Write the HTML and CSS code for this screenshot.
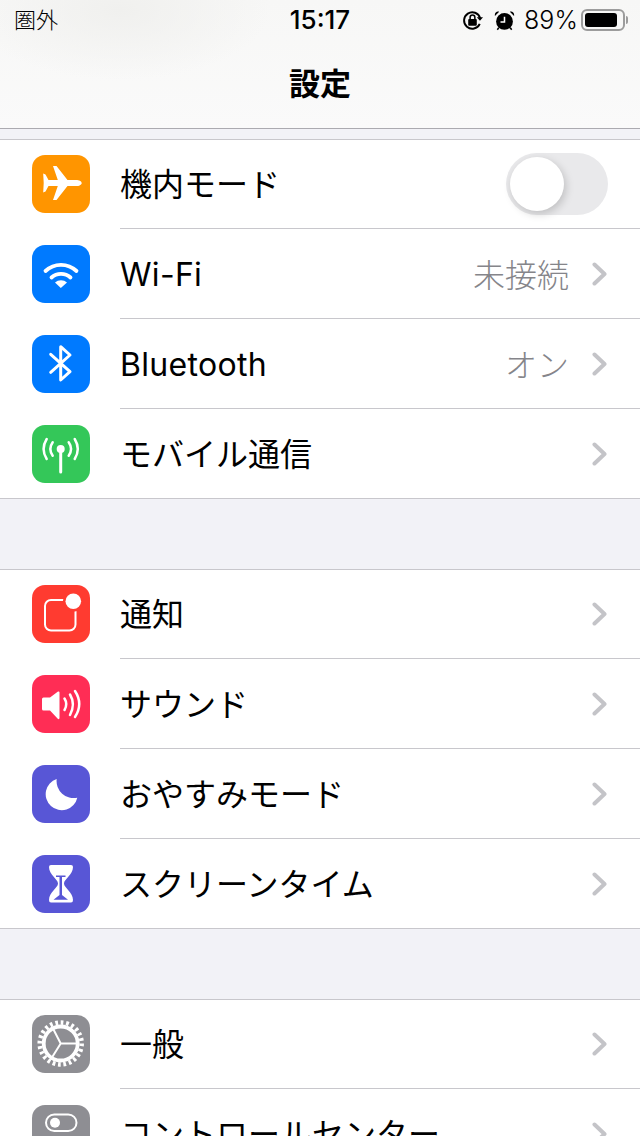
FILE: index.html
```html
<!DOCTYPE html>
<html lang="ja">
<head>
<meta charset="utf-8">
<title>設定</title>
<link rel="stylesheet" href="styles.css">
</head>
<body>
<header class="header">
  <div class="status">
    <span class="carrier">圏外</span>
    <span class="time">15:17</span>
    <div class="status-right">
      <svg class="st-lock" viewBox="0 0 22 22"><path class="ln" d="M18.600 14.500A8.600 8.600 0 1 1 19 8.500"/><path class="fl" d="M15.500 7.500h6.500l-3.200 3.800z"/><rect class="fl" x="6.500" y="9.500" width="9" height="7" rx="1"/><path class="ln thin" d="M8.500 9.500V7.800a2.500 2.500 0 0 1 5 0v1.700"/></svg>
      <svg class="st-alarm" viewBox="0 0 22 22"><circle class="fl" cx="11" cy="12" r="8.800"/><path class="wl" d="M11 7v5.500H6.800"/><path class="fl" d="M1 6.200 5.400 1.800C3 .6.200 3.200 1 6.200zM21 6.200 16.600 1.800C19 .6 21.800 3.200 21 6.200z"/><path class="ln thin" d="M5 18.500 3.500 20.700M17 18.500l1.500 2.200"/></svg>
      <span class="pct">89%</span>
      <div class="battery"><div class="battery-fill"></div></div>
      <div class="battery-nub"></div>
    </div>
  </div>
  <h1 class="title">設定</h1>
</header>

<main class="page">
  <section class="group">
    <div class="row">
      <div class="icon orange"><svg viewBox="0 0 58 58"><path class="w" d="M49.700 28C49.700 26 47 24.900 44 24.900H35.500L24.500 11H21L25.800 24.900H16.500L13.500 19.500 11.200 18.500 11.700 28 11.200 37.500 13.500 36.500 16.500 31.100H25.800L21 45H24.500L35.500 31.100H44C47 31.100 49.700 30 49.700 28Z"/></svg></div>
      <div class="body"><span class="label">機内モード</span><div class="switch"><div class="knob"></div></div></div>
    </div>
    <div class="row">
      <div class="icon blue"><svg viewBox="0 0 58 58"><path class="s s4" d="M13.500 26A22.500 22.500 0 0 1 44.500 26"/><path class="s s4" d="M19.500 32.500A14 14 0 0 1 38.500 32.500"/><path class="w" d="M28.800 43 23 37.500A8.800 8.800 0 0 1 35 37.500Z"/></svg></div>
      <div class="body"><span class="label latin">Wi-Fi</span><span class="value">未接続</span><svg class="chev" viewBox="0 0 16 24"><path d="M2.500 2.500 12.500 12 2.500 21.500"/></svg></div>
    </div>
    <div class="row">
      <div class="icon blue"><svg viewBox="0 0 58 58"><path class="s s3" d="M18.700 19.300 38 36.700 28.700 45V11.700L38 20 18.700 37.300"/></svg></div>
      <div class="body"><span class="label latin">Bluetooth</span><span class="value">オン</span><svg class="chev" viewBox="0 0 16 24"><path d="M2.500 2.500 12.500 12 2.500 21.500"/></svg></div>
    </div>
    <div class="row">
      <div class="icon green"><svg viewBox="0 0 58 58"><circle class="w" cx="28.700" cy="24" r="4"/><path class="s s3" d="M28.700 24V47"/><path class="s s25" d="M14.700 14Q8.500 24 14.700 34M42.700 14Q48.900 24 42.700 34M20.700 17.300Q16 24 20.700 30.700M36.700 17.300Q41.400 24 36.700 30.700"/></svg></div>
      <div class="body"><span class="label">モバイル通信</span><svg class="chev" viewBox="0 0 16 24"><path d="M2.500 2.500 12.500 12 2.500 21.500"/></svg></div>
    </div>
  </section>

  <section class="group">
    <div class="row">
      <div class="icon red"><svg viewBox="0 0 58 58"><rect class="s s2" x="13" y="15" width="30.500" height="30.500" rx="6"/><circle class="dot-cut" cx="41.300" cy="16.300" r="10.500"/><circle class="w" cx="41.300" cy="16.300" r="7.800"/></svg></div>
      <div class="body"><span class="label">通知</span><svg class="chev" viewBox="0 0 16 24"><path d="M2.500 2.500 12.500 12 2.500 21.500"/></svg></div>
    </div>
    <div class="row">
      <div class="icon pink"><svg viewBox="0 0 58 58"><path class="w" d="M11.500 22.500H18L26 16.500Q27.500 16 27.500 17.500V43Q27.500 44.500 26 44L18 35.500H11.500Q10 35.500 10 34V24Q10 22.500 11.500 22.500Z"/><path class="s s25" d="M32.500 23.500Q36 29 32.500 35M38 19.500Q43.800 29 38 40M43 16Q51.500 29 43 42"/></svg></div>
      <div class="body"><span class="label">サウンド</span><svg class="chev" viewBox="0 0 16 24"><path d="M2.500 2.500 12.500 12 2.500 21.500"/></svg></div>
    </div>
    <div class="row">
      <div class="icon indigo"><svg viewBox="0 0 58 58"><path class="w" d="M24.700 14A16 16 0 1 0 45.300 32.700A17 17 0 0 1 24.700 14Z"/></svg></div>
      <div class="body"><span class="label">おやすみモード</span><svg class="chev" viewBox="0 0 16 24"><path d="M2.500 2.500 12.500 12 2.500 21.500"/></svg></div>
    </div>
    <div class="row">
      <div class="icon indigo"><svg viewBox="0 0 58 58"><path class="w" d="M19 10H39Q41 10 41 12C41 20 32 24 32 28.500C32 33 41 37 41 45Q41 47.500 39 47.500H19Q17 47.500 17 45C17 37 26 33 26 28.500C26 24 17 20 17 12Q17 10 19 10Z"/><path class="hg" d="M24 20.500H33.500V22H30V40L36 44.800H21.500L27.500 40V22H24Z"/></svg></div>
      <div class="body"><span class="label">スクリーンタイム</span><svg class="chev" viewBox="0 0 16 24"><path d="M2.500 2.500 12.500 12 2.500 21.500"/></svg></div>
    </div>
  </section>

  <section class="group">
    <div class="row">
      <div class="icon gray"><svg viewBox="0 0 58 58"><circle class="teeth" cx="28.700" cy="28.500" r="21" pathLength="48"/><circle class="s s4" cx="28.700" cy="28.500" r="17"/><path class="s s2" d="M28.700 28.500 21.500 14.500M28.700 28.500H45M28.700 28.500 19 44"/></svg></div>
      <div class="body"><span class="label">一般</span><svg class="chev" viewBox="0 0 16 24"><path d="M2.500 2.500 12.500 12 2.500 21.500"/></svg></div>
    </div>
    <div class="row">
      <div class="icon gray"><svg viewBox="0 0 58 58"><rect class="s s2" x="14" y="9.500" width="30.500" height="16.500" rx="8.250"/><circle class="w" cx="23" cy="17.700" r="5"/></svg></div>
      <div class="body"><span class="label">コントロールセンター</span><svg class="chev" viewBox="0 0 16 24"><path d="M2.500 2.500 12.500 12 2.500 21.500"/></svg></div>
    </div>
  </section>
</main>
</body>
</html>
```

FILE: styles.css
```css
* { box-sizing: border-box; }
html, body { margin: 0; height: 1136px; overflow: hidden; }
body {
  background: #f2f2f7;
  color: #000;
  font-family: "Inter", "Noto Sans CJK JP", sans-serif;
}

.header {
  height: 129px;
  border-bottom: 1px solid #abaab0;
  background:
    radial-gradient(ellipse 150px 70px at 120px 10px, #f0f0ee 0%, rgba(240,240,238,0) 100%),
    linear-gradient(#f7f7f6, #fafafa);
  display: flex;
  flex-direction: column;
}
.status {
  height: 40px;
  padding: 0 12px 0 14px;
  display: grid;
  grid-template-columns: 1fr auto 1fr;
  align-items: center;
}
.carrier {
  font-family: "Noto Sans CJK JP", sans-serif;
  font-size: 22px;
  font-weight: 300;
  line-height: 36px;
  margin-bottom: 4px;
  color: #000;
}
.time {
  font-size: 26px;
  font-weight: 500;
  line-height: 40px;
  margin-left: -2px;
}
.status-right {
  display: flex;
  align-items: center;
  justify-content: flex-end;
}
.st-lock { width: 21px; height: 21px; margin-right: 11px; }
.st-alarm { width: 21px; height: 21px; margin-right: 9px; }
.ln { fill: none; stroke: #000; stroke-width: 2; }
.ln.thin { stroke-width: 1.6; }
.fl { fill: #000; }
.wl { fill: none; stroke: #fff; stroke-width: 1.6; }
.pct { font-size: 25px; font-weight: 300; line-height: 40px; margin-right: 3px; letter-spacing: .1px; }
.battery {
  width: 44px;
  height: 22px;
  border: 2px solid #9c9c9c;
  border-radius: 6px;
  padding: 2px;
}
.battery-fill { width: 32px; height: 14px; background: #000; border-radius: 3px; }
.battery-nub { width: 2px; height: 8px; margin-left: 1px; background: #9c9c9c; border-radius: 0 2px 2px 0; }

.title {
  margin: 20px 0 0;
  text-align: center;
  font-family: "Noto Sans CJK JP", sans-serif;
  font-size: 31px;
  font-weight: 700;
  line-height: 44px;
}

.page { padding-top: 10px; display: flex; flex-direction: column; gap: 70px; }
.group {
  background: #fff;
  box-shadow: inset 0 1px #c8c7cc, inset 0 -1px #c8c7cc;
}
.row { display: flex; height: 90px; padding-left: 32px; gap: 30px; }
.icon {
  flex: none;
  width: 58px;
  height: 58px;
  margin-top: 16px;
  border-radius: 13px;
}
.icon svg { display: block; width: 58px; height: 58px; }
.orange { background: #ff9500; }
.blue { background: #007aff; }
.green { background: #34c759; }
.red { background: #ff3b30; }
.pink { background: #ff2d55; }
.indigo { background: #5856d6; }
.gray { background: #8e8e93; }

.w { fill: #fff; }
.s { fill: none; stroke: #fff; stroke-linecap: round; stroke-linejoin: round; }
.s2 { stroke-width: 2; }
.s25 { stroke-width: 2.500; }
.s3 { stroke-width: 3; }
.s4 { stroke-width: 3.800; }
.dot-cut { fill: #ff3b30; }
.hg { fill: #5856d6; }
.teeth { fill: none; stroke: #fff; stroke-width: 4.500; stroke-dasharray: 1 1; }

.body {
  flex: 1;
  height: 90px;
  border-bottom: 1px solid #c8c7cc;
  display: flex;
  align-items: center;
  padding-right: 32px;
}
.row:last-child .body { border-bottom-color: transparent; }
.label {
  flex: 1;
  font-size: 32px;
  font-weight: 400;
  line-height: 44px;
  padding-top: 2px;
  white-space: nowrap;
}
.latin { letter-spacing: .3px; }
.value {
  font-family: "Noto Sans CJK JP", sans-serif;
  font-size: 32px;
  font-weight: 300;
  line-height: 44px;
  padding-bottom: 2px;
  box-sizing: content-box;
  color: #85858a;
  margin-right: 23px;
}
.chev { width: 16px; height: 24px; flex: none; }
.chev path { fill: none; stroke: #c4c4c8; stroke-width: 4; stroke-linecap: round; stroke-linejoin: round; }

.switch {
  width: 102px;
  height: 62px;
  border-radius: 31px;
  background: #e9e9eb;
  padding: 4px;
}
.knob {
  width: 54px;
  height: 54px;
  border-radius: 50%;
  background: #fff;
  box-shadow: 2px 3px 8px rgba(0,0,0,.18);
}
```
